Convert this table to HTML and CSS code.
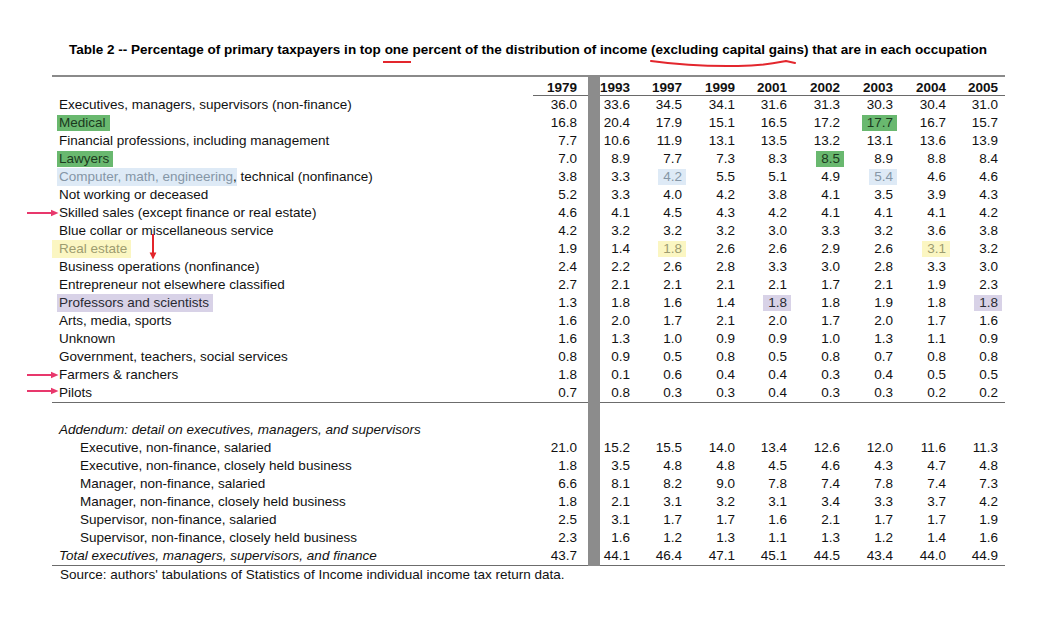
FILE: index.html
```html
<!DOCTYPE html>
<html lang="en">
<head>
<meta charset="utf-8">
<title>Table 2</title>
<link rel="stylesheet" href="styles.css">
</head>
<body>
<h1 class="title">Table 2 -- Percentage of primary taxpayers in top <span class="mark-one">one</span> percent of the distribution of income <span class="mark-curve">(excluding capital gains)<svg class="curve" width="150" height="9" viewBox="0 0 150 9"><path d="M1 2 C 30 6, 60 7.5, 88 7 S 128 3.5, 136 2 L 145 4" fill="none" stroke="#e3262d" stroke-width="2" stroke-linecap="round"/></svg></span> that are in each occupation</h1>

<table class="data">
<colgroup>
<col class="c-lab"><col class="c-79"><col class="c-bar"><col class="c-93"><col class="c-a"><col class="c-b"><col class="c-a"><col class="c-b"><col class="c-b"><col class="c-b"><col class="c-a">
</colgroup>
<thead>
<tr><th class="lab"></th><th class="n79">1979</th><th class="bar"></th><th>1993</th><th>1997</th><th>1999</th><th>2001</th><th>2002</th><th>2003</th><th>2004</th><th>2005</th></tr>
</thead>
<tbody>
<tr><td class="lab">Executives, managers, supervisors (non-finance)</td><td class="n79">36.0</td><td class="bar"></td><td>33.6</td><td>34.5</td><td>34.1</td><td>31.6</td><td>31.3</td><td>30.3</td><td>30.4</td><td>31.0</td></tr>
<tr><td class="lab"><span class="hl-l green">Medical</span></td><td class="n79">16.8</td><td class="bar"></td><td>20.4</td><td>17.9</td><td>15.1</td><td>16.5</td><td>17.2</td><td><span class="hl-n green">17.7</span></td><td>16.7</td><td>15.7</td></tr>
<tr><td class="lab">Financial professions, including management</td><td class="n79">7.7</td><td class="bar"></td><td>10.6</td><td>11.9</td><td>13.1</td><td>13.5</td><td>13.2</td><td>13.1</td><td>13.6</td><td>13.9</td></tr>
<tr><td class="lab"><span class="hl-l green">Lawyers</span></td><td class="n79">7.0</td><td class="bar"></td><td>8.9</td><td>7.7</td><td>7.3</td><td>8.3</td><td><span class="hl-n green">8.5</span></td><td>8.9</td><td>8.8</td><td>8.4</td></tr>
<tr><td class="lab"><span class="hl-l blue">Computer, math, engineering</span>, technical (nonfinance)</td><td class="n79">3.8</td><td class="bar"></td><td>3.3</td><td><span class="hl-n blue">4.2</span></td><td>5.5</td><td>5.1</td><td>4.9</td><td><span class="hl-n blue">5.4</span></td><td>4.6</td><td>4.6</td></tr>
<tr><td class="lab">Not working or deceased</td><td class="n79">5.2</td><td class="bar"></td><td>3.3</td><td>4.0</td><td>4.2</td><td>3.8</td><td>4.1</td><td>3.5</td><td>3.9</td><td>4.3</td></tr>
<tr><td class="lab"><svg class="arrow-r" width="32" height="8" viewBox="0 0 32 8"><path d="M0 4 H26" stroke="#e8386c" stroke-width="2"/><polygon points="24,0.8 31.5,4 24,7.2" fill="#e8386c"/></svg>Skilled sales (except finance or real estate)</td><td class="n79">4.6</td><td class="bar"></td><td>4.1</td><td>4.5</td><td>4.3</td><td>4.2</td><td>4.1</td><td>4.1</td><td>4.1</td><td>4.2</td></tr>
<tr><td class="lab">Blue collar or miscellaneous service</td><td class="n79">4.2</td><td class="bar"></td><td>3.2</td><td>3.2</td><td>3.2</td><td>3.0</td><td>3.3</td><td>3.2</td><td>3.6</td><td>3.8</td></tr>
<tr><td class="lab"><span class="hl-l yellow wide">Real estate</span><svg class="arrow-d" width="8" height="26" viewBox="0 0 8 26"><path d="M4 0 V20" stroke="#e3252b" stroke-width="2"/><polygon points="0.6,18.5 7.4,18.5 4,25.5" fill="#e3252b"/></svg></td><td class="n79">1.9</td><td class="bar"></td><td>1.4</td><td><span class="hl-n yellow">1.8</span></td><td>2.6</td><td>2.6</td><td>2.9</td><td>2.6</td><td><span class="hl-n yellow">3.1</span></td><td>3.2</td></tr>
<tr><td class="lab">Business operations (nonfinance)</td><td class="n79">2.4</td><td class="bar"></td><td>2.2</td><td>2.6</td><td>2.8</td><td>3.3</td><td>3.0</td><td>2.8</td><td>3.3</td><td>3.0</td></tr>
<tr><td class="lab">Entrepreneur not elsewhere classified</td><td class="n79">2.7</td><td class="bar"></td><td>2.1</td><td>2.1</td><td>2.1</td><td>2.1</td><td>1.7</td><td>2.1</td><td>1.9</td><td>2.3</td></tr>
<tr><td class="lab"><span class="hl-l purple">Professors and scientists</span></td><td class="n79">1.3</td><td class="bar"></td><td>1.8</td><td>1.6</td><td>1.4</td><td><span class="hl-n purple">1.8</span></td><td>1.8</td><td>1.9</td><td>1.8</td><td><span class="hl-n purple">1.8</span></td></tr>
<tr><td class="lab">Arts, media, sports</td><td class="n79">1.6</td><td class="bar"></td><td>2.0</td><td>1.7</td><td>2.1</td><td>2.0</td><td>1.7</td><td>2.0</td><td>1.7</td><td>1.6</td></tr>
<tr><td class="lab">Unknown</td><td class="n79">1.6</td><td class="bar"></td><td>1.3</td><td>1.0</td><td>0.9</td><td>0.9</td><td>1.0</td><td>1.3</td><td>1.1</td><td>0.9</td></tr>
<tr><td class="lab">Government, teachers, social services</td><td class="n79">0.8</td><td class="bar"></td><td>0.9</td><td>0.5</td><td>0.8</td><td>0.5</td><td>0.8</td><td>0.7</td><td>0.8</td><td>0.8</td></tr>
<tr><td class="lab"><svg class="arrow-r" width="32" height="8" viewBox="0 0 32 8"><path d="M0 4 H26" stroke="#e8386c" stroke-width="2"/><polygon points="24,0.8 31.5,4 24,7.2" fill="#e8386c"/></svg>Farmers &amp; ranchers</td><td class="n79">1.8</td><td class="bar"></td><td>0.1</td><td>0.6</td><td>0.4</td><td>0.4</td><td>0.3</td><td>0.4</td><td>0.5</td><td>0.5</td></tr>
<tr class="sep"><td class="lab"><svg class="arrow-r up" width="32" height="8" viewBox="0 0 32 8"><path d="M0 4 H26" stroke="#e8386c" stroke-width="2"/><polygon points="24,0.8 31.5,4 24,7.2" fill="#e8386c"/></svg>Pilots</td><td class="n79">0.7</td><td class="bar"></td><td>0.8</td><td>0.3</td><td>0.3</td><td>0.4</td><td>0.3</td><td>0.3</td><td>0.2</td><td>0.2</td></tr>
<tr><td class="lab"></td><td class="n79"></td><td class="bar"></td><td></td><td></td><td></td><td></td><td></td><td></td><td></td><td></td></tr>
<tr><td class="lab it">Addendum: detail on executives, managers, and supervisors</td><td class="n79"></td><td class="bar"></td><td></td><td></td><td></td><td></td><td></td><td></td><td></td><td></td></tr>
<tr><td class="lab ind">Executive, non-finance, salaried</td><td class="n79">21.0</td><td class="bar"></td><td>15.2</td><td>15.5</td><td>14.0</td><td>13.4</td><td>12.6</td><td>12.0</td><td>11.6</td><td>11.3</td></tr>
<tr><td class="lab ind">Executive, non-finance, closely held business</td><td class="n79">1.8</td><td class="bar"></td><td>3.5</td><td>4.8</td><td>4.8</td><td>4.5</td><td>4.6</td><td>4.3</td><td>4.7</td><td>4.8</td></tr>
<tr><td class="lab ind">Manager, non-finance, salaried</td><td class="n79">6.6</td><td class="bar"></td><td>8.1</td><td>8.2</td><td>9.0</td><td>7.8</td><td>7.4</td><td>7.8</td><td>7.4</td><td>7.3</td></tr>
<tr><td class="lab ind">Manager, non-finance, closely held business</td><td class="n79">1.8</td><td class="bar"></td><td>2.1</td><td>3.1</td><td>3.2</td><td>3.1</td><td>3.4</td><td>3.3</td><td>3.7</td><td>4.2</td></tr>
<tr><td class="lab ind">Supervisor, non-finance, salaried</td><td class="n79">2.5</td><td class="bar"></td><td>3.1</td><td>1.7</td><td>1.7</td><td>1.6</td><td>2.1</td><td>1.7</td><td>1.7</td><td>1.9</td></tr>
<tr><td class="lab ind">Supervisor, non-finance, closely held business</td><td class="n79">2.3</td><td class="bar"></td><td>1.6</td><td>1.2</td><td>1.3</td><td>1.1</td><td>1.3</td><td>1.2</td><td>1.4</td><td>1.6</td></tr>
<tr class="sep"><td class="lab it">Total executives, managers, supervisors, and finance</td><td class="n79">43.7</td><td class="bar"></td><td>44.1</td><td>46.4</td><td>47.1</td><td>45.1</td><td>44.5</td><td>43.4</td><td>44.0</td><td>44.9</td></tr>
</tbody>
</table>
<p class="source">Source: authors' tabulations of Statistics of Income individual income tax return data.</p>
</body>
</html>
```

FILE: styles.css
```css
html, body {
  margin: 0;
  padding: 0;
  background: #ffffff;
}
body {
  font-family: "Liberation Sans", Arial, sans-serif;
  font-size: 13.5px;
  color: #111111;
}
.title {
  margin: 0;
  padding-top: 41px;
  font-size: 13.5px;
  line-height: 18px;
  font-weight: bold;
  text-align: center;
  color: #000;
}
.mark-one {
  position: relative;
}
.mark-one::after {
  content: "";
  position: absolute;
  left: -2px;
  right: -2px;
  bottom: -6px;
  height: 2.5px;
  background: #e3262d;
}
.mark-curve {
  position: relative;
}
.curve {
  position: absolute;
  left: -1px;
  top: calc(100% + 2px);
}

.data {
  margin: 16px 0 0 52px;
  width: 953px;
  table-layout: fixed;
  border-collapse: separate;
  border-spacing: 0;
}
.c-lab { width: 481px; }
.c-79 { width: 55px; }
.c-bar { width: 12px; }
.c-93 { width: 37px; }
.c-a { width: 52px; }
.c-b { width: 53px; }

.data th {
  font-weight: bold;
  font-size: 13.5px;
  height: 15px;
  line-height: 15px;
  padding: 3px 7px 0 0;
  text-align: right;
  border-top: 2px solid #8a8a8a;
  border-bottom: 1px solid #6a6a6a;
  white-space: nowrap;
}
.data th.lab {
  border-bottom: none;
}
.data td {
  height: 18px;
  line-height: 18px;
  padding: 0 7px 0 0;
  text-align: right;
  white-space: nowrap;
}
.data td.lab {
  text-align: left;
  padding: 0 0 0 7px;
  position: relative;
}
.data td.ind {
  padding-left: 28px;
}
.data td.it {
  font-style: italic;
}
.data .n79 {
  padding-right: 11px;
}
.data .bar,
.data th.bar {
  padding: 0;
  background: #8c8c8c;
  border-bottom-color: #8c8c8c;
}
.data tr.sep td {
  border-bottom: 1px solid #6c6c6c;
}
.data tr.sep td.bar {
  border-bottom-color: #8c8c8c;
}

.hl-l {
  display: inline-block;
  line-height: 16px;
  padding: 0 4px 0 2px;
  margin: 0 -4px 0 -2px;
}
.hl-l.wide {
  padding-left: 7px;
  margin-left: -7px;
  line-height: 18px;
}
.hl-l.purple,
.hl-l.blue {
  line-height: 18px;
}
.hl-n {
  display: inline-block;
  line-height: 16px;
  padding: 0 4px 0 5px;
  margin-right: -4px;
}
.green {
  background: #69b86f;
  color: #1b3a1e;
}
.blue {
  background: #deeaf6;
  color: #8596a6;
}
.yellow {
  background: #fbf6c2;
  color: #9d9c70;
}
.purple {
  background: #d8d2e7;
  color: #2a2a33;
}

.arrow-r {
  position: absolute;
  left: -25px;
  top: 5px;
}
.arrow-r.up {
  top: 3px;
}
.arrow-d {
  position: absolute;
  left: 97px;
  top: -6px;
}

.source {
  margin: 0;
  padding-left: 60px;
  line-height: 18px;
  font-size: 13.5px;
}
```
